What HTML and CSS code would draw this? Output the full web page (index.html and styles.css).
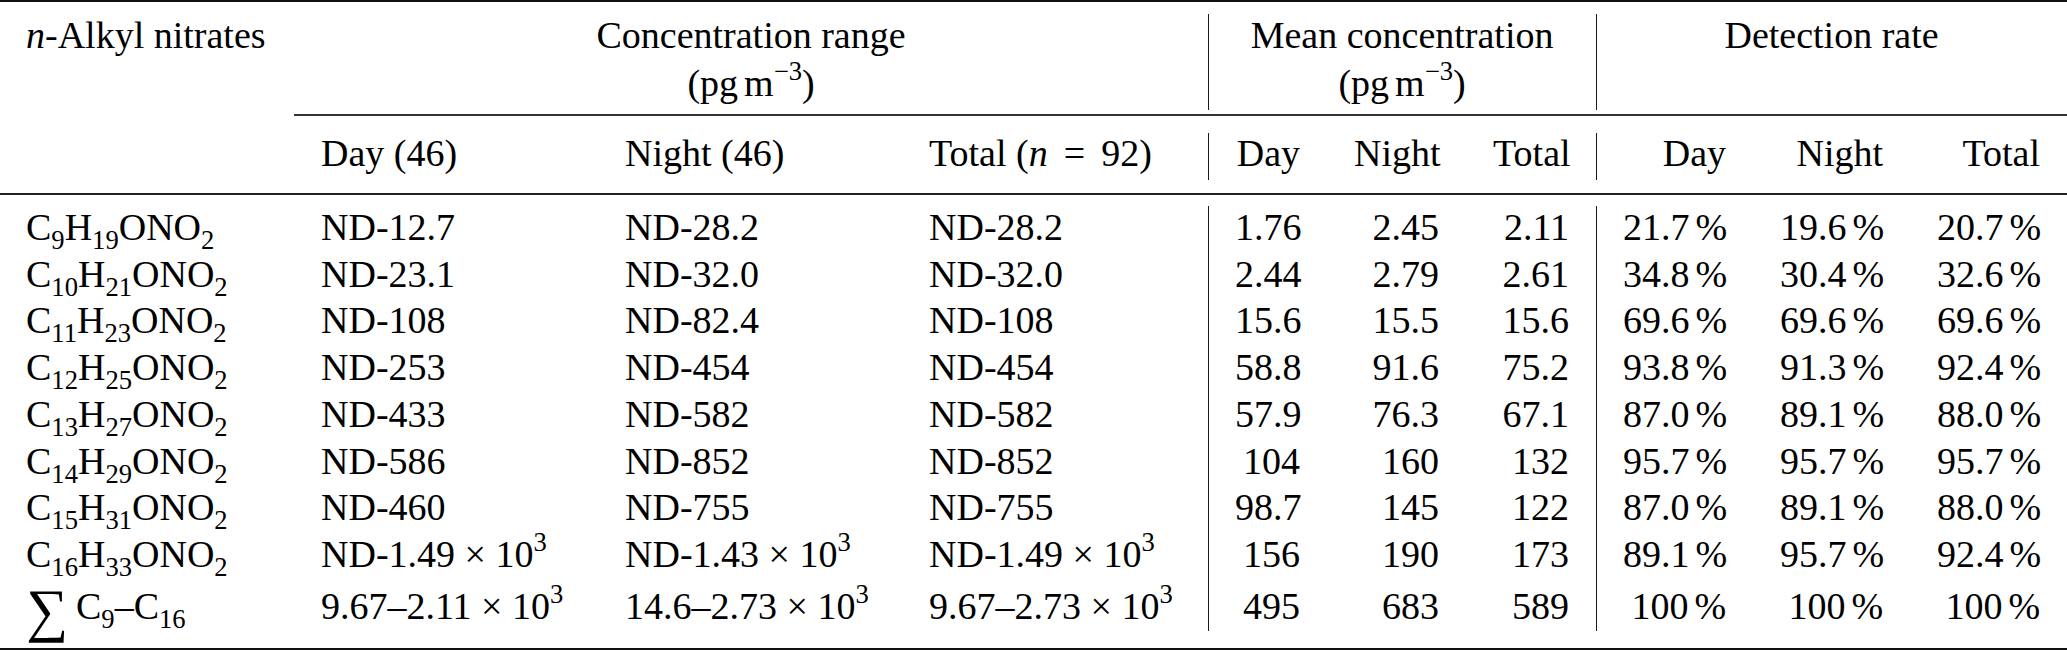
FILE: index.html
```html
<!DOCTYPE html>
<html lang="en">
<head>
<meta charset="utf-8">
<title>n-Alkyl nitrates</title>
<link rel="stylesheet" href="styles.css">
</head>
<body>
<table class="tbl">
  <colgroup>
    <col class="w-name">
    <col class="w-rng"><col class="w-rng"><col class="w-rng4">
    <col class="w-m1"><col class="w-m2"><col class="w-m3">
    <col class="w-d"><col class="w-d"><col class="w-d">
  </colgroup>
  <thead>
    <tr class="h1">
      <th class="name"><i>n</i>-Alkyl nitrates</th>
      <th colspan="3" class="grp">Concentration range<br>(pg<span class="th"></span>m<sup class="sup">−3</sup>)</th>
      <th colspan="3" class="grp vl">Mean concentration<br>(pg<span class="th"></span>m<sup class="sup">−3</sup>)</th>
      <th colspan="3" class="grp vl">Detection rate</th>
    </tr>
    <tr class="h2">
      <th class="name"></th>
      <th class="l">Day (46)</th>
      <th class="l">Night (46)</th>
      <th class="l">Total (<i>n</i><span class="eq">=</span>92)</th>
      <th class="r vl">Day</th>
      <th class="r">Night</th>
      <th class="r">Total</th>
      <th class="r vl">Day</th>
      <th class="r">Night</th>
      <th class="r">Total</th>
    </tr>
  </thead>
  <tbody>
    <tr class="first">
      <td class="name">C<sub class="sub">9</sub>H<sub class="sub">19</sub>ONO<sub class="sub">2</sub></td>
      <td class="l">ND-12.7</td><td class="l">ND-28.2</td><td class="l">ND-28.2</td>
      <td class="r vl">1.76</td><td class="r">2.45</td><td class="r">2.11</td>
      <td class="r vl">21.7<span class="th"></span>%</td><td class="r">19.6<span class="th"></span>%</td><td class="r">20.7<span class="th"></span>%</td>
    </tr>
    <tr>
      <td class="name">C<sub class="sub">10</sub>H<sub class="sub">21</sub>ONO<sub class="sub">2</sub></td>
      <td class="l">ND-23.1</td><td class="l">ND-32.0</td><td class="l">ND-32.0</td>
      <td class="r vl">2.44</td><td class="r">2.79</td><td class="r">2.61</td>
      <td class="r vl">34.8<span class="th"></span>%</td><td class="r">30.4<span class="th"></span>%</td><td class="r">32.6<span class="th"></span>%</td>
    </tr>
    <tr>
      <td class="name">C<sub class="sub">11</sub>H<sub class="sub">23</sub>ONO<sub class="sub">2</sub></td>
      <td class="l">ND-108</td><td class="l">ND-82.4</td><td class="l">ND-108</td>
      <td class="r vl">15.6</td><td class="r">15.5</td><td class="r">15.6</td>
      <td class="r vl">69.6<span class="th"></span>%</td><td class="r">69.6<span class="th"></span>%</td><td class="r">69.6<span class="th"></span>%</td>
    </tr>
    <tr>
      <td class="name">C<sub class="sub">12</sub>H<sub class="sub">25</sub>ONO<sub class="sub">2</sub></td>
      <td class="l">ND-253</td><td class="l">ND-454</td><td class="l">ND-454</td>
      <td class="r vl">58.8</td><td class="r">91.6</td><td class="r">75.2</td>
      <td class="r vl">93.8<span class="th"></span>%</td><td class="r">91.3<span class="th"></span>%</td><td class="r">92.4<span class="th"></span>%</td>
    </tr>
    <tr>
      <td class="name">C<sub class="sub">13</sub>H<sub class="sub">27</sub>ONO<sub class="sub">2</sub></td>
      <td class="l">ND-433</td><td class="l">ND-582</td><td class="l">ND-582</td>
      <td class="r vl">57.9</td><td class="r">76.3</td><td class="r">67.1</td>
      <td class="r vl">87.0<span class="th"></span>%</td><td class="r">89.1<span class="th"></span>%</td><td class="r">88.0<span class="th"></span>%</td>
    </tr>
    <tr>
      <td class="name">C<sub class="sub">14</sub>H<sub class="sub">29</sub>ONO<sub class="sub">2</sub></td>
      <td class="l">ND-586</td><td class="l">ND-852</td><td class="l">ND-852</td>
      <td class="r vl">104</td><td class="r">160</td><td class="r">132</td>
      <td class="r vl">95.7<span class="th"></span>%</td><td class="r">95.7<span class="th"></span>%</td><td class="r">95.7<span class="th"></span>%</td>
    </tr>
    <tr>
      <td class="name">C<sub class="sub">15</sub>H<sub class="sub">31</sub>ONO<sub class="sub">2</sub></td>
      <td class="l">ND-460</td><td class="l">ND-755</td><td class="l">ND-755</td>
      <td class="r vl">98.7</td><td class="r">145</td><td class="r">122</td>
      <td class="r vl">87.0<span class="th"></span>%</td><td class="r">89.1<span class="th"></span>%</td><td class="r">88.0<span class="th"></span>%</td>
    </tr>
    <tr>
      <td class="name">C<sub class="sub">16</sub>H<sub class="sub">33</sub>ONO<sub class="sub">2</sub></td>
      <td class="l">ND-1.49 × 10<sup class="sup">3</sup></td><td class="l">ND-1.43 × 10<sup class="sup">3</sup></td><td class="l">ND-1.49 × 10<sup class="sup">3</sup></td>
      <td class="r vl">156</td><td class="r">190</td><td class="r">173</td>
      <td class="r vl">89.1<span class="th"></span>%</td><td class="r">95.7<span class="th"></span>%</td><td class="r">92.4<span class="th"></span>%</td>
    </tr>
    <tr class="last">
      <td class="name"><span class="sum">∑</span>C<sub class="sub">9</sub>–C<sub class="sub">16</sub></td>
      <td class="l">9.67–2.11 × 10<sup class="sup">3</sup></td><td class="l">14.6–2.73 × 10<sup class="sup">3</sup></td><td class="l">9.67–2.73 × 10<sup class="sup">3</sup></td>
      <td class="r vl">495</td><td class="r">683</td><td class="r">589</td>
      <td class="r vl">100<span class="th"></span>%</td><td class="r">100<span class="th"></span>%</td><td class="r">100<span class="th"></span>%</td>
    </tr>
  </tbody>
</table>
</body>
</html>
```

FILE: styles.css
```css
html, body {
  margin: 0;
  padding: 0;
  background: #ffffff;
}

body {
  font-family: "Liberation Serif", "Times New Roman", serif;
  font-size: 38px;
  color: #000000;
}

.tbl {
  width: 2067px;
  table-layout: fixed;
  border-collapse: separate;
  border-spacing: 0;
  border-top: 2px solid #111111;
}

.w-name { width: 294px; }
.w-rng { width: 304px; }
.w-rng4 { width: 306px; }
.w-m1 { width: 119px; }
.w-m2 { width: 139px; }
.w-m3 { width: 130px; }
.w-d { width: 157px; }

th, td {
  padding: 0 27px;
  font-weight: normal;
  vertical-align: top;
  white-space: nowrap;
  text-align: left;
  background-repeat: no-repeat;
}

.name { padding-left: 26px; }
.l { text-align: left; }
.r { text-align: right; }
.grp { text-align: center; }

/* header row 1 */
.h1 th {
  line-height: 48px;
  padding-top: 9px;
  padding-bottom: 9px;
}
.h1 .grp {
  padding-bottom: 7px;
  border-bottom: 2px solid #333333;
}

/* header row 2 */
.h2 th {
  line-height: 48px;
  padding-top: 13px;
  padding-bottom: 16px;
  border-bottom: 2px solid #222222;
}

/* body */
tbody td {
  line-height: 46.7px;
}
tbody .first td { padding-top: 9px; }
tbody .last td {
  padding-top: 5px;
  padding-bottom: 19px;
  border-bottom: 2px solid #111111;
}

/* vertical rules (broken around horizontal rules) */
.vl {
  background-image: linear-gradient(#1a1a1a, #1a1a1a);
  background-size: 1px 100%;
  background-position: left top;
}
.h1 .vl {
  background-position: left 12px;
  background-size: 1px 96px;
}
.h2 .vl {
  background-position: left 17px;
  background-size: 1px 47px;
}
tbody .first .vl {
  background-position: left 11px;
}
tbody .last .vl {
  background-size: 1px calc(100% - 17px);
}

/* math-ish typography */
.sub {
  font-size: 0.7em;
  vertical-align: -0.34em;
  line-height: 0;
}
.sup {
  font-size: 0.7em;
  vertical-align: 0.62em;
  line-height: 0;
}
.th {
  display: inline-block;
  width: 6px;
}
.eq {
  display: inline-block;
  margin: 0 16px;
}
.sum {
  display: inline-block;
  font-size: 1.55em;
  line-height: 0;
  vertical-align: -0.2em;
  margin-right: 8px;
}
```
